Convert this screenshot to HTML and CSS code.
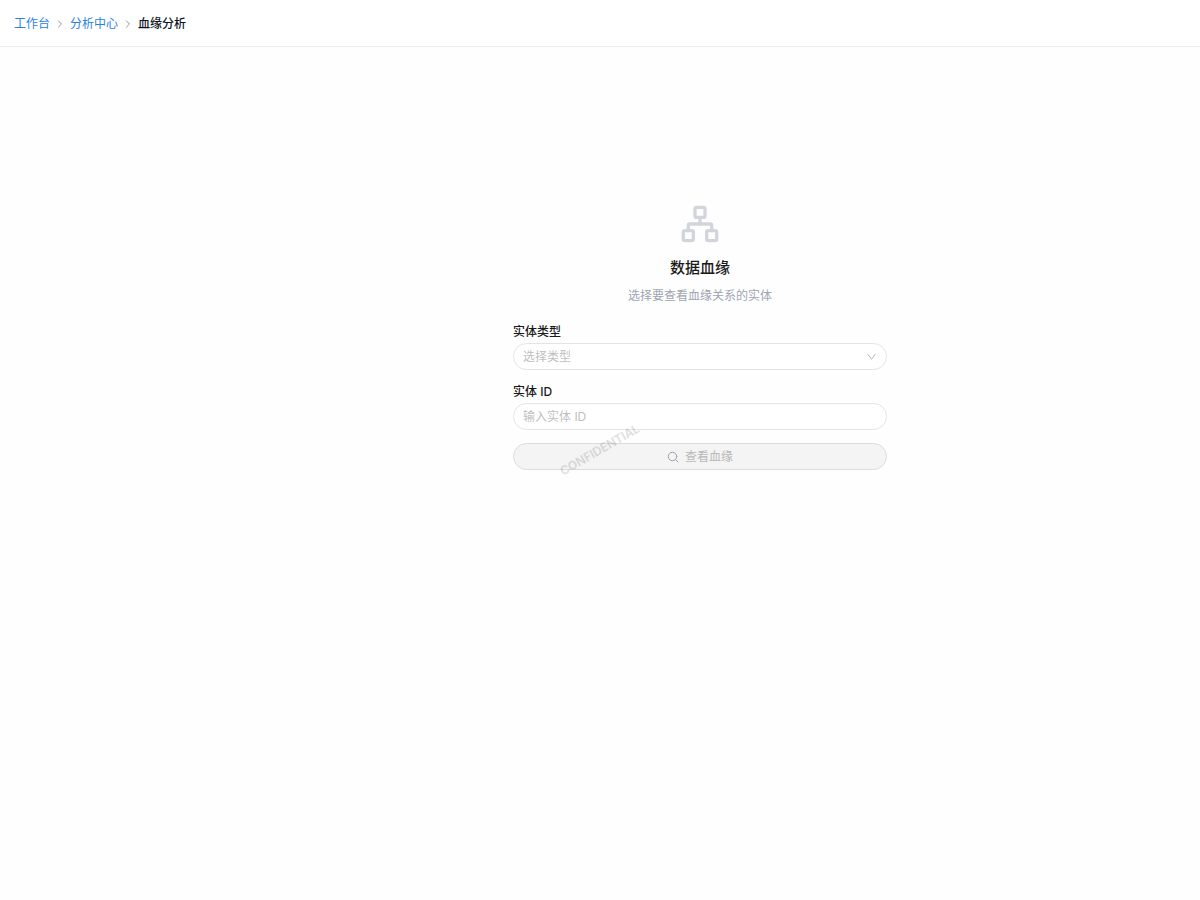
FILE: index.html
```html
<!DOCTYPE html>
<html lang="zh-CN">
  <head>
    <meta charset="UTF-8" />
    <meta name="viewport" content="width=device-width, initial-scale=1.0" />
    <title>血缘分析</title>
    <link rel="stylesheet" href="styles.css">
  </head>
  <body>
    <header class="topbar">
      <nav class="breadcrumb">
        <a href="#">工作台</a>
        <svg class="separator" viewBox="0 0 24 24"><path d="m9 18 6-6-6-6" /></svg>
        <a href="#">分析中心</a>
        <svg class="separator" viewBox="0 0 24 24"><path d="m9 18 6-6-6-6" /></svg>
        <span class="current">血缘分析</span>
      </nav>
    </header>

    <main class="content">
      <form class="lineage-form">
        <div class="intro">
          <svg class="intro-icon" viewBox="0 0 24 24">
            <rect x="16" y="16" width="6" height="6" rx="1" />
            <rect x="2" y="16" width="6" height="6" rx="1" />
            <rect x="9" y="2" width="6" height="6" rx="1" />
            <path d="M5 16v-3a1 1 0 0 1 1-1h12a1 1 0 0 1 1 1v3" />
            <path d="M12 12V8" />
          </svg>
          <h1>数据血缘</h1>
          <p>选择要查看血缘关系的实体</p>
        </div>

        <div class="field">
          <label for="entity_type">实体类型</label>
          <div class="select-wrap">
            <select id="entity_type" name="entity_type">
              <option value="">选择类型</option>
            </select>
            <svg class="arrow" viewBox="0 0 12 12"><path d="M2 3.5 6 9l4-5.500" /></svg>
          </div>
        </div>

        <div class="field">
          <label for="entity_id">实体 ID</label>
          <input id="entity_id" name="entity_id" type="text" placeholder="输入实体 ID" />
        </div>

        <button type="submit" disabled>
          <svg class="search" viewBox="0 0 24 24">
            <circle cx="11" cy="11" r="8.500" />
            <path d="m22 22-5-5" />
          </svg>
          查看血缘
        </button>
      </form>
    </main>

    <div class="watermark">CONFIDENTIAL</div>
  </body>
</html>
```

FILE: styles.css
```css
* {
  box-sizing: border-box;
}

body {
  margin: 0;
  font-family: "Inter", "Noto Sans CJK SC", sans-serif;
  font-size: 12px;
  line-height: 18px;
  color: #1a1a1a;
  background-color: #fefefe;
}

svg {
  fill: none;
  stroke: currentColor;
  stroke-width: 2;
  stroke-linecap: round;
  stroke-linejoin: round;
}

.topbar {
  padding: 15px 14px 13px;
  background-color: #fff;
  border-bottom: 1px solid #e8eaf0;
}

.breadcrumb {
  display: flex;
  align-items: center;
  gap: 4px;
}

.breadcrumb a {
  color: #2b80e8;
  text-decoration: none;
}

.separator {
  width: 12px;
  height: 12px;
  color: #8f96a3;
}

.current {
  font-weight: 500;
  color: #0f1424;
}

.content {
  display: flex;
  justify-content: center;
  margin-left: 200px;
  padding: 157px 20px 20px;
}

.lineage-form {
  display: flex;
  flex-direction: column;
  gap: 13px;
  width: 100%;
  max-width: 374px;
}

.intro {
  display: flex;
  flex-direction: column;
  align-items: center;
  margin-bottom: 5px;
  text-align: center;
}

.intro-icon {
  width: 40px;
  height: 40px;
  color: #d2d5dc;
}

h1 {
  margin: 12px 0 7px;
  font-size: 15px;
  line-height: 24px;
  font-weight: 500;
}

p {
  margin: 0;
  color: #a0a5b2;
}

.field {
  display: flex;
  flex-direction: column;
  gap: 2px;
}

label {
  font-weight: 500;
}

.select-wrap {
  position: relative;
}

select,
input,
button {
  display: block;
  width: 100%;
  height: 27px;
  padding: 0 9px;
  border: 1px solid #e4e4e4;
  border-radius: 14px;
  font: inherit;
  background-color: #fff;
}

select {
  appearance: none;
  color: #bfbfbf;
}

input::placeholder {
  color: #bfbfbf;
}

.arrow {
  position: absolute;
  top: 8px;
  right: 10px;
  width: 11px;
  height: 11px;
  color: #b4b4b4;
  stroke-width: 1;
  pointer-events: none;
}

button {
  display: flex;
  align-items: center;
  justify-content: center;
  gap: 6px;
  color: #b8b8b8;
  background-color: #f4f4f4;
  border-color: #dcdcdc;
}

.search {
  width: 12px;
  height: 12px;
  color: #a0a0a0;
}

.watermark {
  position: fixed;
  top: 50%;
  left: 50%;
  transform: translate(-50%, -50%) rotate(-30deg);
  font-weight: 600;
  color: rgba(0, 0, 0, 0.14);
  pointer-events: none;
}
```
